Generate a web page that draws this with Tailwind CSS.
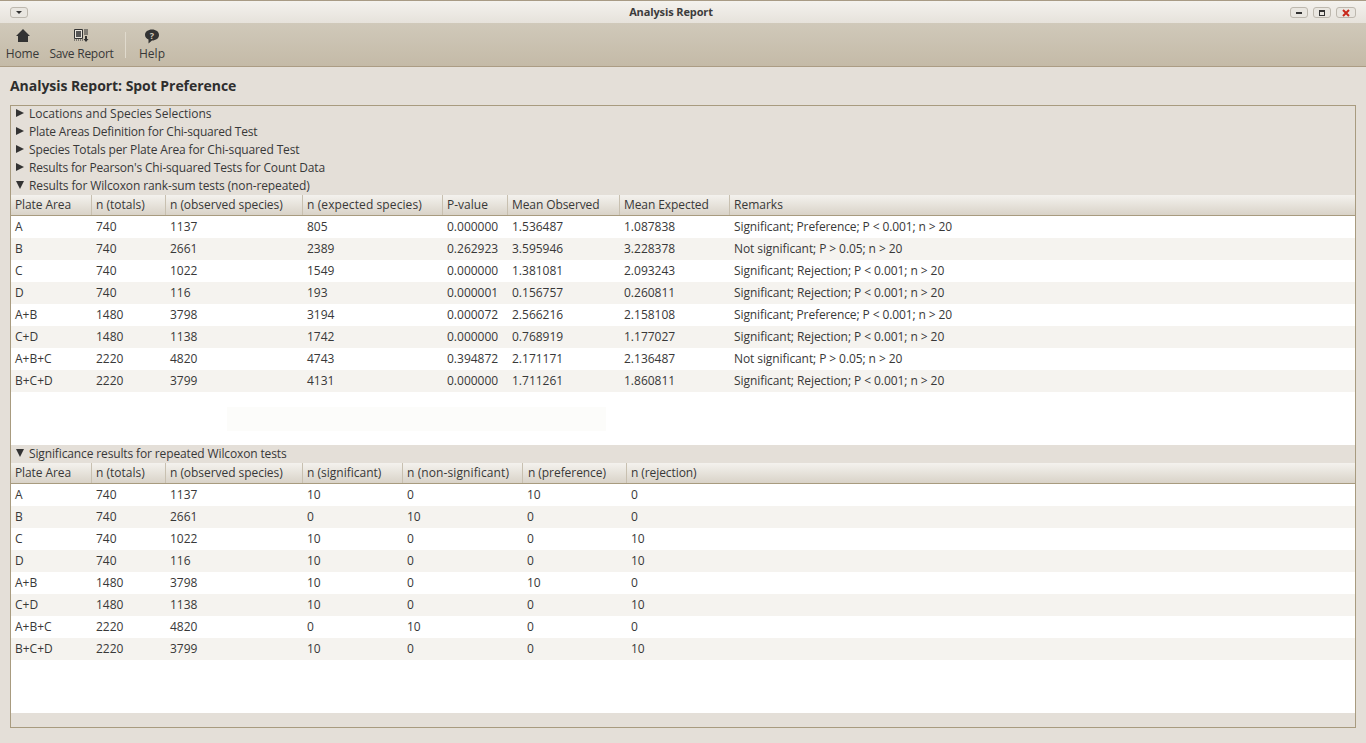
<!DOCTYPE html>
<html lang="en">

<head>
    <meta charset="UTF-8">
    <title>Analysis Report</title>
    <script src="https://cdn.jsdelivr.net/npm/@tailwindcss/browser@4"></script>
</head>

<body class="w-[1366px] h-[743px] overflow-hidden bg-[#e4dfd8] font-['Open_Sans','Noto_Sans',sans-serif] text-[12px] text-[#383838]">

    <!-- Title bar -->
    <div class="h-[23px] border-t border-[#a89b85] bg-gradient-to-b from-[#f4f2ee] to-[#e6e2db] flex items-start px-[10px]">
        <div class="w-[18px] h-[11px] mt-[6px] rounded-[3px] border border-[#bdb8ae] bg-[#e9e6e0] flex items-center justify-center">
            <div class="w-0 h-0 border-x-[3px] border-x-transparent border-t-[3px] border-t-[#333]"></div>
        </div>
        <div class="flex-1 text-center text-[11px] leading-[21px] font-bold tracking-[-0.12px] text-[#3c3c3c] pl-[24px]">Analysis Report</div>
        <div class="flex gap-[5px] mt-[6px]">
            <div class="w-[18px] h-[11px] rounded-[3px] border border-[#bdb8ae] bg-[#e9e6e0] flex items-center justify-center">
                <div class="w-[6px] h-[2px] bg-[#333]"></div>
            </div>
            <div class="w-[18px] h-[11px] rounded-[3px] border border-[#bdb8ae] bg-[#e9e6e0] flex items-center justify-center">
                <div class="w-[6px] h-[6px] border border-t-2 border-[#333]"></div>
            </div>
            <div class="w-[20px] h-[11px] rounded-[3px] border border-[#bdb8ae] bg-[#e9e6e0] flex items-center justify-center">
                <svg width="8" height="8" viewBox="0 0 8 8"><path d="M1 1 7 7M7 1 1 7" stroke="#c8281a" stroke-width="2"/></svg>
            </div>
        </div>
    </div>

    <!-- Toolbar -->
    <div class="h-[44px] border-b border-[#ab9c84] bg-gradient-to-b from-[#d0c9ba] to-[#c4baa7] flex items-start">
        <div class="w-[44px] pl-[1px] h-full flex flex-col items-center pt-[6px]">
            <svg width="16" height="14" viewBox="0 0 16 14"><path d="M8 0 15 7H13V13H3V7H1Z" fill="#333"/></svg>
            <span class="mt-[3px] leading-[16px] tracking-[-0.1px]">Home</span>
        </div>
        <div class="w-[75px] h-full flex flex-col items-center pt-[6px]">
            <svg class="mr-[2px]" width="16" height="14" viewBox="0 0 16 14"><path d="M1.5 .5H9.5V9.500H1.500Z" fill="#e8e4dc" stroke="#333"/><path d="M3 2H8V8H3Z" fill="#555"/><path d="M1 11H2M3 11H4M5 11H6M7 11H8M9 11H10" stroke="#333"/><path d="M11 1H15M11 3H15M11 5H15" stroke="#333"/><path d="M12 7H14V10H15.500L13 13 10.500 10H12Z" fill="#333"/></svg>
            <span class="mt-[3px] leading-[16px] tracking-[-0.25px]">Save Report</span>
        </div>
        <div class="w-[1px] h-[26px] mt-[9px] bg-[#e0dacd] ml-[6px]"></div>
        <div class="w-[52px] h-full flex flex-col items-center pt-[6px]">
            <svg width="16" height="15" viewBox="0 0 16 15"><path d="M8 .5C12 .5 15 2.800 15 6S12 11.500 8 11.500L4.500 14.500V10.500C2.500 9.500 1 8 1 6 1 2.800 4 .5 8 .5Z" fill="#333"/><text x="8" y="9.500" font-size="9" font-weight="700" text-anchor="middle" fill="#d0c9ba">?</text></svg>
            <span class="mt-[2px] leading-[16px]">Help</span>
        </div>
    </div>

    <!-- Heading -->
    <div class="h-[38px] pl-[10px] pb-[2px] flex items-center text-[14px] font-bold tracking-[-0.05px] text-[#2e2e2e]">Analysis Report: Spot Preference</div>

    <!-- Report frame -->
    <div class="mx-[10px] h-[623px] border border-[#a89b7f] bg-[#e4dfd8] flex flex-col">
        <div class="h-[17px] pb-[2px] flex items-center pl-[5px] gap-[5px]"><span class="w-0 h-0 border-y-[4px] border-y-transparent border-l-[8px] border-l-[#333] mb-[2px]"></span><span>Locations and Species Selections</span></div>
        <div class="h-[18px] flex items-center pl-[5px] gap-[5px]"><span class="w-0 h-0 border-y-[4px] border-y-transparent border-l-[8px] border-l-[#333] mb-[2px]"></span><span class="tracking-[-0.21px]">Plate Areas Definition for Chi-squared Test</span></div>
        <div class="h-[18px] flex items-center pl-[5px] gap-[5px]"><span class="w-0 h-0 border-y-[4px] border-y-transparent border-l-[8px] border-l-[#333] mb-[2px]"></span><span class="tracking-[-0.14px]">Species Totals per Plate Area for Chi-squared Test</span></div>
        <div class="h-[18px] flex items-center pl-[5px] gap-[5px]"><span class="w-0 h-0 border-y-[4px] border-y-transparent border-l-[8px] border-l-[#333] mb-[2px]"></span><span class="tracking-[-0.18px]">Results for Pearson's Chi-squared Tests for Count Data</span></div>
        <div class="h-[18px] flex items-center pl-[5px] gap-[5px]"><span class="w-0 h-0 border-x-[4px] border-x-transparent border-t-[8px] border-t-[#333] mb-[2px]"></span><span class="tracking-[-0.12px]">Results for Wilcoxon rank-sum tests (non-repeated)</span></div>

        <!-- Table 1 -->
        <div class="h-[21px] grid grid-cols-[81px_74px_137px_140px_65px_112px_110px_1fr] items-stretch border-b border-[#a89b7f] bg-gradient-to-b from-[#f4f2ee] to-[#d9d3c8]">
            <div class="pl-[4px] flex items-center border-r border-[#c8c0b0] tracking-[-0.1px]">Plate Area</div>
            <div class="pl-[4px] flex items-center border-r border-[#c8c0b0]">n (totals)</div>
            <div class="pl-[4px] flex items-center border-r border-[#c8c0b0] tracking-[-0.05px]">n (observed species)</div>
            <div class="pl-[4px] flex items-center border-r border-[#c8c0b0] tracking-[0.1px]">n (expected species)</div>
            <div class="pl-[4px] flex items-center border-r border-[#c8c0b0]">P-value</div>
            <div class="pl-[4px] flex items-center border-r border-[#c8c0b0] tracking-[-0.1px]">Mean Observed</div>
            <div class="pl-[4px] flex items-center border-r border-[#c8c0b0] tracking-[-0.08px]">Mean Expected</div>
            <div class="pl-[4px] flex items-center">Remarks</div>
        </div>
        <div class="h-[229px] bg-white relative">
            <div class="h-[22px] grid grid-cols-[81px_74px_137px_140px_65px_112px_110px_1fr] items-center *:pl-[4px]"><div>A</div><div>740</div><div>1137</div><div>805</div><div>0.000000</div><div>1.536487</div><div>1.087838</div><div class="tracking-[-0.11px]">Significant; Preference; P &lt; 0.001; n &gt; 20</div></div>
            <div class="h-[22px] grid grid-cols-[81px_74px_137px_140px_65px_112px_110px_1fr] items-center *:pl-[4px] bg-[#f5f3ef]"><div>B</div><div>740</div><div>2661</div><div>2389</div><div>0.262923</div><div>3.595946</div><div>3.228378</div><div class="tracking-[-0.09px]">Not significant; P &gt; 0.05; n &gt; 20</div></div>
            <div class="h-[22px] grid grid-cols-[81px_74px_137px_140px_65px_112px_110px_1fr] items-center *:pl-[4px]"><div>C</div><div>740</div><div>1022</div><div>1549</div><div>0.000000</div><div>1.381081</div><div>2.093243</div><div class="tracking-[-0.07px]">Significant; Rejection; P &lt; 0.001; n &gt; 20</div></div>
            <div class="h-[22px] grid grid-cols-[81px_74px_137px_140px_65px_112px_110px_1fr] items-center *:pl-[4px] bg-[#f5f3ef]"><div>D</div><div>740</div><div>116</div><div>193</div><div>0.000001</div><div>0.156757</div><div>0.260811</div><div class="tracking-[-0.07px]">Significant; Rejection; P &lt; 0.001; n &gt; 20</div></div>
            <div class="h-[22px] grid grid-cols-[81px_74px_137px_140px_65px_112px_110px_1fr] items-center *:pl-[4px]"><div>A+B</div><div>1480</div><div>3798</div><div>3194</div><div>0.000072</div><div>2.566216</div><div>2.158108</div><div class="tracking-[-0.11px]">Significant; Preference; P &lt; 0.001; n &gt; 20</div></div>
            <div class="h-[22px] grid grid-cols-[81px_74px_137px_140px_65px_112px_110px_1fr] items-center *:pl-[4px] bg-[#f5f3ef]"><div>C+D</div><div>1480</div><div>1138</div><div>1742</div><div>0.000000</div><div>0.768919</div><div>1.177027</div><div class="tracking-[-0.07px]">Significant; Rejection; P &lt; 0.001; n &gt; 20</div></div>
            <div class="h-[22px] grid grid-cols-[81px_74px_137px_140px_65px_112px_110px_1fr] items-center *:pl-[4px]"><div>A+B+C</div><div>2220</div><div>4820</div><div>4743</div><div>0.394872</div><div>2.171171</div><div>2.136487</div><div class="tracking-[-0.09px]">Not significant; P &gt; 0.05; n &gt; 20</div></div>
            <div class="h-[22px] grid grid-cols-[81px_74px_137px_140px_65px_112px_110px_1fr] items-center *:pl-[4px] bg-[#f5f3ef]"><div>B+C+D</div><div>2220</div><div>3799</div><div>4131</div><div>0.000000</div><div>1.711261</div><div>1.860811</div><div class="tracking-[-0.07px]">Significant; Rejection; P &lt; 0.001; n &gt; 20</div></div>
            <!-- faint leftover patch -->
            <div class="absolute left-[216px] top-[191px] w-[379px] h-[24px] bg-[#fcfcfa]"></div>
        </div>

        <div class="h-[18px] flex items-center pl-[5px] gap-[5px]"><span class="w-0 h-0 border-x-[4px] border-x-transparent border-t-[8px] border-t-[#333] mb-[2px]"></span><span class="tracking-[-0.13px]">Significance results for repeated Wilcoxon tests</span></div>

        <!-- Table 2 -->
        <div class="h-[21px] grid grid-cols-[81px_74px_137px_100px_120px_104px_1fr] items-stretch border-b border-[#a89b7f] bg-gradient-to-b from-[#f4f2ee] to-[#d9d3c8]">
            <div class="pl-[4px] flex items-center border-r border-[#c8c0b0] tracking-[-0.1px]">Plate Area</div>
            <div class="pl-[4px] flex items-center border-r border-[#c8c0b0]">n (totals)</div>
            <div class="pl-[4px] flex items-center border-r border-[#c8c0b0] tracking-[-0.05px]">n (observed species)</div>
            <div class="pl-[4px] flex items-center border-r border-[#c8c0b0]">n (significant)</div>
            <div class="pl-[4px] flex items-center border-r border-[#c8c0b0] tracking-[0.1px]">n (non-significant)</div>
            <div class="pl-[5px] flex items-center border-r border-[#c8c0b0] tracking-[-0.06px]">n (preference)</div>
            <div class="pl-[4px] flex items-center tracking-[-0.08px]">n (rejection)</div>
        </div>
        <div class="h-[229px] bg-white">
            <div class="h-[22px] grid grid-cols-[81px_74px_137px_100px_120px_104px_1fr] items-center *:pl-[4px]"><div>A</div><div>740</div><div>1137</div><div>10</div><div>0</div><div>10</div><div>0</div></div>
            <div class="h-[22px] grid grid-cols-[81px_74px_137px_100px_120px_104px_1fr] items-center *:pl-[4px] bg-[#f5f3ef]"><div>B</div><div>740</div><div>2661</div><div>0</div><div>10</div><div>0</div><div>0</div></div>
            <div class="h-[22px] grid grid-cols-[81px_74px_137px_100px_120px_104px_1fr] items-center *:pl-[4px]"><div>C</div><div>740</div><div>1022</div><div>10</div><div>0</div><div>0</div><div>10</div></div>
            <div class="h-[22px] grid grid-cols-[81px_74px_137px_100px_120px_104px_1fr] items-center *:pl-[4px] bg-[#f5f3ef]"><div>D</div><div>740</div><div>116</div><div>10</div><div>0</div><div>0</div><div>10</div></div>
            <div class="h-[22px] grid grid-cols-[81px_74px_137px_100px_120px_104px_1fr] items-center *:pl-[4px]"><div>A+B</div><div>1480</div><div>3798</div><div>10</div><div>0</div><div>10</div><div>0</div></div>
            <div class="h-[22px] grid grid-cols-[81px_74px_137px_100px_120px_104px_1fr] items-center *:pl-[4px] bg-[#f5f3ef]"><div>C+D</div><div>1480</div><div>1138</div><div>10</div><div>0</div><div>0</div><div>10</div></div>
            <div class="h-[22px] grid grid-cols-[81px_74px_137px_100px_120px_104px_1fr] items-center *:pl-[4px]"><div>A+B+C</div><div>2220</div><div>4820</div><div>0</div><div>10</div><div>0</div><div>0</div></div>
            <div class="h-[22px] grid grid-cols-[81px_74px_137px_100px_120px_104px_1fr] items-center *:pl-[4px] bg-[#f5f3ef]"><div>B+C+D</div><div>2220</div><div>3799</div><div>10</div><div>0</div><div>0</div><div>10</div></div>
        </div>
    </div>

</body>

</html>
